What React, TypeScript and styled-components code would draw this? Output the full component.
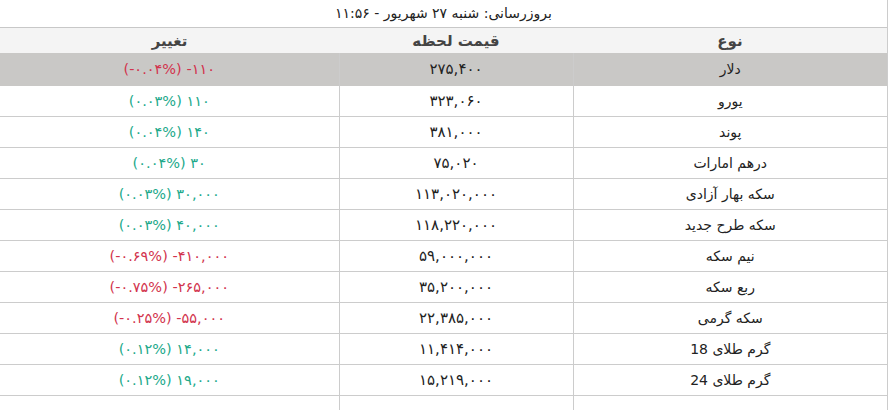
import styled, { createGlobalStyle } from "styled-components";

type Rate = {
  name: string;
  price: string;
  change: string;
  percent: string;
  up: boolean;
};

const rates: Rate[] = [
  { name: "دلار", price: "۲۷۵,۴۰۰", percent: "(-۰.۰۴%)", change: "-۱۱۰", up: false },
  { name: "یورو", price: "۳۲۳,۰۶۰", percent: "(۰.۰۳%)", change: "۱۱۰", up: true },
  { name: "پوند", price: "۳۸۱,۰۰۰", percent: "(۰.۰۴%)", change: "۱۴۰", up: true },
  { name: "درهم امارات", price: "۷۵,۰۲۰", percent: "(۰.۰۴%)", change: "۳۰", up: true },
  { name: "سکه بهار آزادی", price: "۱۱۳,۰۲۰,۰۰۰", percent: "(۰.۰۳%)", change: "۳۰,۰۰۰", up: true },
  { name: "سکه طرح جدید", price: "۱۱۸,۲۲۰,۰۰۰", percent: "(۰.۰۳%)", change: "۴۰,۰۰۰", up: true },
  { name: "نیم سکه", price: "۵۹,۰۰۰,۰۰۰", percent: "(-۰.۶۹%)", change: "-۴۱۰,۰۰۰", up: false },
  { name: "ربع سکه", price: "۳۵,۲۰۰,۰۰۰", percent: "(-۰.۷۵%)", change: "-۲۶۵,۰۰۰", up: false },
  { name: "سکه گرمی", price: "۲۲,۳۸۵,۰۰۰", percent: "(-۰.۲۵%)", change: "-۵۵,۰۰۰", up: false },
  { name: "گرم طلای 18", price: "۱۱,۴۱۴,۰۰۰", percent: "(۰.۱۲%)", change: "۱۴,۰۰۰", up: true },
  { name: "گرم طلای 24", price: "۱۵,۲۱۹,۰۰۰", percent: "(۰.۱۲%)", change: "۱۹,۰۰۰", up: true },
  { name: "", price: "", percent: "", change: "", up: true },
];

const GlobalStyle = createGlobalStyle`
  html, body {
    margin: 0;
    padding: 0;
    background: #fff;
    overflow: hidden;
  }
  body {
    font-family: "DejaVu Sans", "Noto Sans", sans-serif;
    color: #222;
  }
`;

const Wrapper = styled.div`
  width: 887px;
  height: 410px;
  border-right: 1px solid #cccccc;
  direction: rtl;
`;

const Updated = styled.div`
  height: 27px;
  line-height: 27px;
  text-align: center;
  font-size: 14px;
  color: #222;
  border-bottom: 1px solid #c8c8c8;
`;

const Table = styled.table`
  width: 100%;
  border-collapse: collapse;
  table-layout: fixed;
`;

const HeadCell = styled.th`
  height: 25px;
  padding: 0;
  background: #f4f4f4;
  font-size: 15px;
  font-weight: bold;
  color: #444;
  text-align: center;
`;

const Row = styled.tr<{ $active?: boolean }>`
  height: ${(p) => (p.$active ? "32px" : "31px")};
  background: ${(p) => (p.$active ? "#c9c8c6" : "#fff")};
  border-bottom: 1px solid ${(p) => (p.$active ? "#c9c8c6" : "#cccccc")};
`;

const Cell = styled.td<{ $active?: boolean; $size?: number }>`
  padding: 0;
  text-align: center;
  font-size: ${(p) => p.$size ?? 14}px;
  color: #222;
  & + & {
    border-right: 1px solid ${(p) => (p.$active ? "#c9c8c6" : "#cccccc")};
  }
`;

const Change = styled.span<{ $up: boolean }>`
  display: inline-block;
  direction: ltr;
  font-size: 14.5px;
  color: ${(p) => (p.$up ? "#22a98a" : "#d2334d")};
`;

export default function App() {
  return (
    <>
      <GlobalStyle />
      <Wrapper>
        <Updated>بروزرسانی: شنبه ۲۷ شهریور - ۱۱:۵۶</Updated>
        <Table>
          <colgroup>
            <col style={{ width: 314 }} />
            <col style={{ width: 234 }} />
            <col />
          </colgroup>
          <thead>
            <tr>
              <HeadCell>نوع</HeadCell>
              <HeadCell>قیمت لحظه</HeadCell>
              <HeadCell>تغییر</HeadCell>
            </tr>
          </thead>
          <tbody>
            {rates.map((r, i) => (
              <Row key={i} $active={i === 0}>
                <Cell $active={i === 0}>{r.name}</Cell>
                <Cell $active={i === 0} $size={15}>
                  {r.price}
                </Cell>
                <Cell $active={i === 0}>
                  {r.change && (
                    <Change $up={r.up}>
                      {r.percent} {r.change}
                    </Change>
                  )}
                </Cell>
              </Row>
            ))}
          </tbody>
        </Table>
      </Wrapper>
    </>
  );
}
